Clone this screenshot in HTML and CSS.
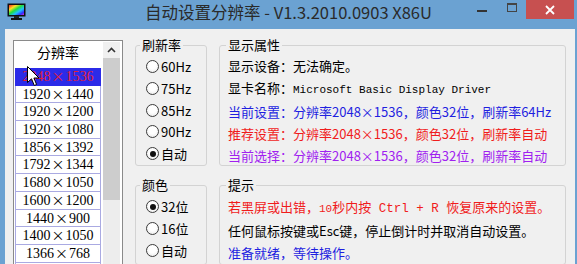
FILE: index.html
```html
<!DOCTYPE html>
<html lang="zh-CN">
<head>
    <meta charset="UTF-8">
    <title>自动设置分辨率</title>
    <link rel="stylesheet" href="styles.css">
</head>
<body>

<div class="window">
    <div class="titlebar">
        <svg class="app-icon" width="19" height="17" viewBox="0 0 19 17">
            <defs>
                <linearGradient id="rainbow" x1="0" y1="0" x2="1" y2="1">
                    <stop offset="0" stop-color="#ff2020"/>
                    <stop offset="0.25" stop-color="#ffe020"/>
                    <stop offset="0.45" stop-color="#20e040"/>
                    <stop offset="0.65" stop-color="#20c0ff"/>
                    <stop offset="0.85" stop-color="#3030ff"/>
                    <stop offset="1" stop-color="#e020e0"/>
                </linearGradient>
            </defs>
            <rect x="0.5" y="0.5" width="18" height="13" fill="#111"/>
            <rect x="2" y="2" width="15" height="10" fill="url(#rainbow)"/>
            <rect x="7" y="13" width="5" height="2" fill="#222"/>
            <rect x="4" y="15" width="11" height="2" fill="#111"/>
        </svg>
        <div class="title">自动设置分辨率 - V1.3.2010.0903 X86U</div>
        <div class="caption-btns">
            <span class="cap-btn"><span class="glyph-min"></span></span>
            <span class="cap-btn cap-max"><span class="glyph-max"></span></span>
            <span class="cap-btn cap-close">
                <svg width="10" height="10" viewBox="0 0 10 10">
                    <path d="M1 1 L9 9 M9 1 L1 9" stroke="#fff" stroke-width="1.8"/>
                </svg>
            </span>
        </div>
    </div>

    <div class="client">
        <div class="listbox">
            <div class="list">
                <div class="list-head">分辨率</div>
                <div class="row selected">2048<span class="x">×</span>1536</div>
                <div class="row">1920<span class="x">×</span>1440</div>
                <div class="row">1920<span class="x">×</span>1200</div>
                <div class="row">1920<span class="x">×</span>1080</div>
                <div class="row">1856<span class="x">×</span>1392</div>
                <div class="row">1792<span class="x">×</span>1344</div>
                <div class="row">1680<span class="x">×</span>1050</div>
                <div class="row">1600<span class="x">×</span>1200</div>
                <div class="row">1440<span class="x">×</span>900</div>
                <div class="row">1400<span class="x">×</span>1050</div>
                <div class="row">1366<span class="x">×</span>768</div>
                <div class="row"></div>
            </div>
            <div class="scrollbar">
                <div class="sb-up">
                    <svg width="9" height="6" viewBox="0 0 9 6">
                        <path d="M1 5 L4.5 1.5 L8 5" fill="none" stroke="#333" stroke-width="1.6"/>
                    </svg>
                </div>
                <div class="sb-thumb"></div>
            </div>
        </div>

        <div class="groups">
            <fieldset class="group small">
                <legend>刷新率</legend>
                <div class="radio-list">
                    <label class="radio-row"><span class="radio"></span>60Hz</label>
                    <label class="radio-row"><span class="radio"></span>75Hz</label>
                    <label class="radio-row"><span class="radio"></span>85Hz</label>
                    <label class="radio-row"><span class="radio"></span>90Hz</label>
                    <label class="radio-row"><span class="radio checked"></span>自动</label>
                </div>
            </fieldset>

            <fieldset class="group wide">
                <legend>显示属性</legend>
                <div class="info">
                    <div>显示设备：无法确定。</div>
                    <div>显卡名称：<span class="mono">Microsoft Basic Display Driver</span></div>
                    <div class="blue">当前设置：分辨率2048×1536，颜色32位，刷新率64Hz</div>
                    <div class="red">推荐设置：分辨率2048×1536，颜色32位，刷新率自动</div>
                    <div class="purple">当前选择：分辨率2048×1536，颜色32位，刷新率自动</div>
                </div>
            </fieldset>

            <fieldset class="group small">
                <legend>颜色</legend>
                <div class="radio-list">
                    <label class="radio-row"><span class="radio checked"></span>32位</label>
                    <label class="radio-row"><span class="radio"></span>16位</label>
                    <label class="radio-row"><span class="radio"></span>自动</label>
                </div>
            </fieldset>

            <fieldset class="group wide">
                <legend>提示</legend>
                <div class="info hint">
                    <div class="red">若黑屏或出错，<span class="mono">10</span>秒内按<span class="mono key">&nbsp;Ctrl + R&nbsp;</span>恢复原来的设置。</div>
                    <div>任何鼠标按键或Esc键，停止倒计时并取消自动设置。</div>
                    <div class="blue">准备就绪，等待操作。</div>
                </div>
            </fieldset>
        </div>
    </div>

    <!-- mouse pointer sitting over the first row -->
    <svg class="cursor" width="13" height="21" viewBox="0 0 13 21">
        <path d="M0.5 0.5 L0.5 16.5 L4.5 12.8 L7.3 19.5 L9.6 18.5 L6.9 12 L12 12 Z" fill="#fff" stroke="#000" stroke-width="1"/>
    </svg>
</div>

</body>
</html>
```

FILE: styles.css
```css
body {
    margin: 0;
    font-family: "Noto Sans CJK SC", "Noto Sans", sans-serif;
    font-size: 13px;
    color: #000;
}
.window {
    position: relative;
    width: 577px;
    height: 264px;
    background-color: #6ba2d2; /* window frame blue */
    overflow: hidden;
}

/* title bar */
.titlebar {
    height: 29px;
    display: grid;
    grid-template-columns: 1fr auto 1fr;
    align-items: start;
}
.app-icon {
    margin: 3px 0 0 7px;
}
.title {
    font-size: 16.5px;
    line-height: 25px;
    color: #2a2a2a;
    white-space: nowrap;
}
.caption-btns {
    justify-self: end;
    display: flex;
    height: 19px;
    margin-right: 3px;
}
.cap-btn {
    width: 30px;
    display: flex;
    align-items: center;
    justify-content: center;
}
.cap-max {
    width: 29px;
    align-items: flex-start;
    padding-top: 3px;
    box-sizing: border-box;
}
.cap-close {
    width: 48px;
    background-color: #c75050;
}
.glyph-min {
    width: 10px;
    height: 2px;
    margin-top: 2px;
    background-color: #333;
}
.glyph-max {
    width: 8px;
    height: 6px;
    border: 1px solid #444;
    border-top-width: 2px;
}

/* client area */
.client {
    margin-left: 5px;
    width: 570px;
    height: 235px;
    background-color: #f0f0f0;
    display: flex;
    gap: 12px;
    padding-left: 8px;
    box-sizing: border-box;
    overflow: hidden;
}

/* resolution list */
.listbox {
    margin-top: 11px;
    width: 110px;
    height: 240px;
    flex-shrink: 0;
    border: 1px solid #8a8a8a;
    background-color: #fff;
    padding: 1px 2px 1px 1px;
    box-sizing: border-box;
    display: flex;
}
.list {
    width: 86px;
}
.list-head {
    height: 26px;
    line-height: 20px;
    text-align: center;
    font-size: 14px;
}
.row {
    height: 17.7px;
    box-sizing: border-box;
    border: 1px solid #aaaae2;
    border-top: none;
    font-family: "Liberation Serif", serif;
    font-size: 14px;
    line-height: 16px;
    text-align: center;
    white-space: nowrap;
}
.row .x {
    font-family: "Noto Sans CJK SC", sans-serif;
    font-size: 13px;
    margin: 0 1px;
}
.row.selected {
    background-color: #2b2be8;
    border-color: #2b2be8;
    color: #e0203a;
}
.scrollbar {
    width: 17px;
    margin-left: 2px;
    background-color: #ededed;
}
.sb-up {
    height: 16px;
    display: flex;
    align-items: center;
    justify-content: center;
    background-color: #f0f0f0;
}
.sb-thumb {
    height: 142px;
    background-color: #cdcdcd;
}

/* group boxes */
.groups {
    margin-top: 8px;
    display: grid;
    grid-template-columns: 72px 347px;
    grid-template-rows: 129px auto;
    column-gap: 12px;
    row-gap: 11px;
}
.group {
    margin: 0;
    padding: 0 0 0 4px;
    border: 1px solid #d3d3d3;
    border-radius: 3px;
    min-width: 0;
}
.group.wide {
    padding-left: 6px;
}
.group legend {
    padding: 0 2px;
    font-size: 13px;
    line-height: 16px;
}
.radio-list {
    padding-top: 3px;
}
.radio-row {
    height: 21.7px;
    display: flex;
    align-items: center;
    gap: 2px;
    white-space: nowrap;
}
.radio {
    width: 13px;
    height: 13px;
    margin-left: 6px;
    box-sizing: border-box;
    border: 1px solid #3c3c3c;
    border-radius: 50%;
    background: radial-gradient(circle at 50% 40%, #fff 40%, #e4e4e4 100%);
    display: flex;
    align-items: center;
    justify-content: center;
}
.radio.checked::after {
    content: "";
    width: 6px;
    height: 6px;
    border-radius: 50%;
    background-color: #111;
}
.info {
    padding: 2px 0 0 2px;
    line-height: 22px;
    white-space: nowrap;
}
.info.hint {
    padding-top: 3px;
}
.mono {
    font-family: "Liberation Mono", monospace;
    font-size: 11px;
}
.mono.key {
    font-size: 12.5px;
}
.blue {
    color: #1f1fe0;
}
.red {
    color: #f01c1c;
}
.purple {
    color: #a020f0;
}

.cursor {
    position: absolute;
    left: 27px;
    top: 66px;
}
```
